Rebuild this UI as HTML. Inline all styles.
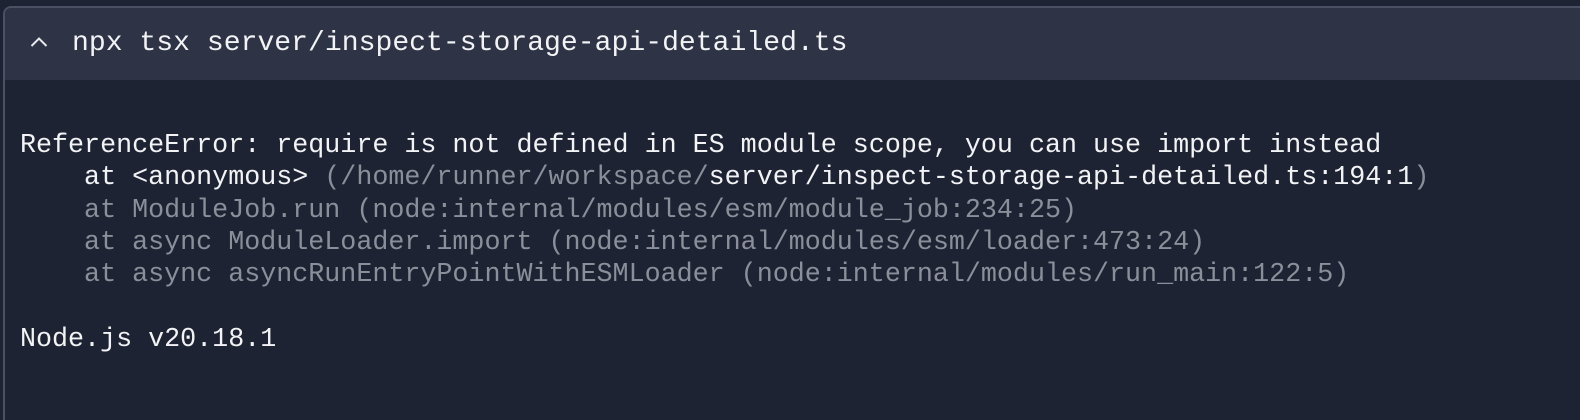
<!DOCTYPE html>
<html><head><meta charset="utf-8"><style>
html,body{margin:0;padding:0;width:1580px;height:420px;background:#1e2333;overflow:hidden}
.panel{position:absolute;left:3px;top:6px;width:1577px;height:414px;border:2px solid #4b5062;border-right:none;border-bottom:none;border-radius:8px 0 0 0;background:#1e2333;box-sizing:border-box;overflow:hidden}
.hdr{position:absolute;left:0;top:0;right:0;height:72px;background:#2e3346}
.cmd{position:absolute;left:67px;top:18px;font:28.1px/36px "Liberation Mono",monospace;color:#f2f3f5;white-space:pre}
.caret{position:absolute;left:24px;top:27px}
.body{position:absolute;left:20px;top:130px;font:26.7px/32.25px "Liberation Mono",monospace;color:#f2f3f5;white-space:pre}
.g{color:#8b8f9a}
</style></head><body>
<div class="panel">
<div class="hdr">
<svg class="caret" width="20" height="14" viewBox="0 0 20 14"><path d="M2.5 11 L10 3.5 L17.5 11" fill="none" stroke="#e8e9ec" stroke-width="2"/></svg>
<div class="cmd">npx tsx server/inspect-storage-api-detailed.ts</div>
</div>
</div>
<div class="body">ReferenceError: require is not defined in ES module scope, you can use import instead
    at &lt;anonymous&gt; <span class="g">(/home/runner/workspace/</span>server/inspect-storage-api-detailed.ts:194:1<span class="g">)</span>
<span class="g">    at ModuleJob.run (node:internal/modules/esm/module_job:234:25)
    at async ModuleLoader.import (node:internal/modules/esm/loader:473:24)
    at async asyncRunEntryPointWithESMLoader (node:internal/modules/run_main:122:5)</span>

Node.js v20.18.1</div>
</body></html>
